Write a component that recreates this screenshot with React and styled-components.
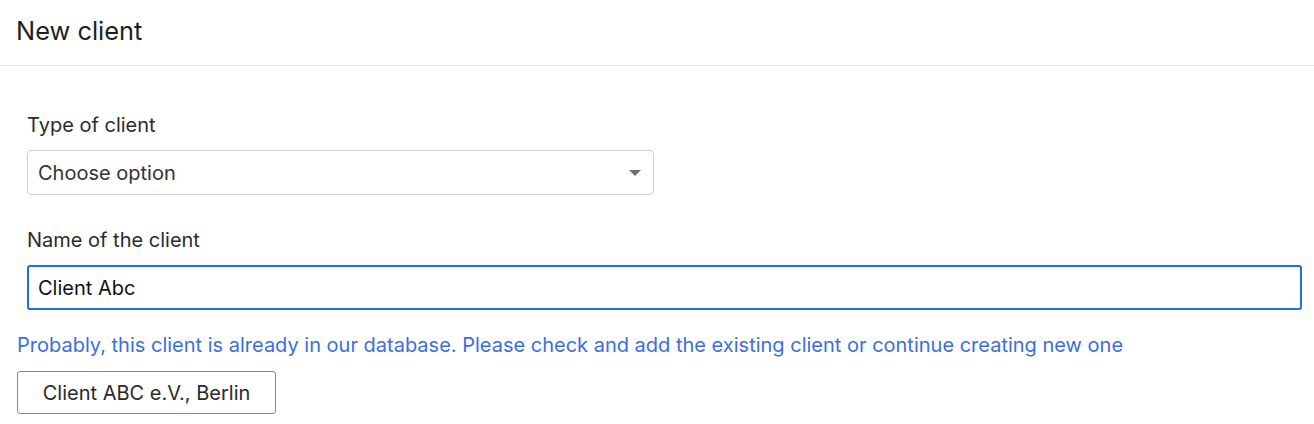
import React from "react";
import styled, { createGlobalStyle } from "styled-components";

const Global = createGlobalStyle`
  html, body { margin: 0; padding: 0; background: #fff; }
  body { font-family: Inter, "Noto Sans", sans-serif; color: #222; }
  * { box-sizing: border-box; }
`;

const Page = styled.div`
  width: 1314px;
  height: 424px;
  background: #fff;
  display: flex;
  flex-direction: column;
  overflow: hidden;
`;

const Header = styled.header`
  height: 66px;
  border-bottom: 1px solid #e2e2e2;
  padding: 0 16px;
  display: flex;
  align-items: center;
`;

const Title = styled.h1`
  margin: 0 0 4px;
  font-size: 25.4px;
  line-height: 30px;
  font-weight: 400;
  color: #1d1f24;
`;

const Body = styled.div`
  padding: 47px 12px 0 17px;
  display: flex;
  flex-direction: column;
`;

const Field = styled.div`
  padding: 0 0 0 10px;
  display: flex;
  flex-direction: column;
  gap: 13px;
  margin-bottom: ${(p) => p.$mb || 0}px;
`;

const Label = styled.label`
  font-size: 20px;
  color: #2b2b2b;
  line-height: 24px;
`;

const SelectBox = styled.div`
  width: 627px;
  height: 45px;
  border: 1px solid #cfcfcf;
  border-radius: 4px;
  display: flex;
  align-items: center;
  justify-content: space-between;
  padding: 0 12px 0 10px;
  font-size: 20px;
  color: #333;
`;

const Caret = styled.span`
  width: 0;
  height: 0;
  border-left: 6px solid transparent;
  border-right: 6px solid transparent;
  border-top: 6px solid #6e6e6e;
`;

const TextInput = styled.div`
  height: 45px;
  border: 2px solid #1f6fe0;
  border-radius: 3px;
  display: flex;
  align-items: center;
  padding: 0 9px;
  font-size: 20px;
  color: #111;
`;

const Hint = styled.p`
  margin: 23px 0 14px;
  font-size: 20px;
  line-height: 24px;
  color: #3b6ee0;
`;

const SuggestButton = styled.button`
  align-self: flex-start;
  width: 259px;
  height: 43px;
  background: #fff;
  border: 1px solid #8a8a8a;
  border-radius: 3px;
  font-family: inherit;
  font-size: 20px;
  color: #2a2a2a;
  cursor: pointer;
`;

export default function App() {
  return (
    <Page>
      <Global />
      <Header>
        <Title>New client</Title>
      </Header>
      <Body>
        <Field $mb={33}>
          <Label>Type of client</Label>
          <SelectBox>
            <span>Choose option</span>
            <Caret />
          </SelectBox>
        </Field>
        <Field>
          <Label>Name of the client</Label>
          <TextInput>Client Abc</TextInput>
        </Field>
        <Hint>
          Probably, this client is already in our database. Please check and add the existing client or continue creating new one
        </Hint>
        <SuggestButton>Client ABC e.V., Berlin</SuggestButton>
      </Body>
    </Page>
  );
}
